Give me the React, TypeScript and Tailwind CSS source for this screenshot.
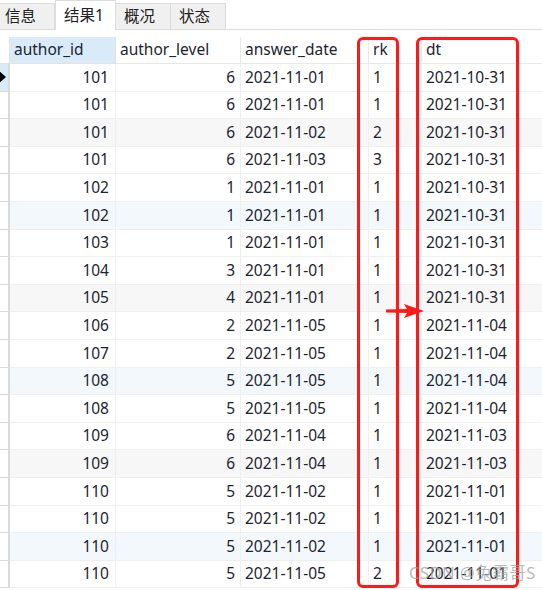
import React from "react";

const rows: [string, string, string, string, string][] = [
  ["101", "6", "2021-11-01", "1", "2021-10-31"],
  ["101", "6", "2021-11-01", "1", "2021-10-31"],
  ["101", "6", "2021-11-02", "2", "2021-10-31"],
  ["101", "6", "2021-11-03", "3", "2021-10-31"],
  ["102", "1", "2021-11-01", "1", "2021-10-31"],
  ["102", "1", "2021-11-01", "1", "2021-10-31"],
  ["103", "1", "2021-11-01", "1", "2021-10-31"],
  ["104", "3", "2021-11-01", "1", "2021-10-31"],
  ["105", "4", "2021-11-01", "1", "2021-10-31"],
  ["106", "2", "2021-11-05", "1", "2021-11-04"],
  ["107", "2", "2021-11-05", "1", "2021-11-04"],
  ["108", "5", "2021-11-05", "1", "2021-11-04"],
  ["108", "5", "2021-11-05", "1", "2021-11-04"],
  ["109", "6", "2021-11-04", "1", "2021-11-03"],
  ["109", "6", "2021-11-04", "1", "2021-11-03"],
  ["110", "5", "2021-11-02", "1", "2021-11-01"],
  ["110", "5", "2021-11-02", "1", "2021-11-01"],
  ["110", "5", "2021-11-02", "1", "2021-11-01"],
  ["110", "5", "2021-11-05", "2", "2021-11-01"],
];

const tabs = ["信息", "结果1", "概况", "状态"];

const cols = "grid grid-cols-[10px_106px_125px_128px_53px_1fr]";

function rowBg(i: number) {
  // every third row gets a faint tint, alternating grey / blue
  if ((i + 1) % 6 === 3) return "bg-[#f7f7f7]";
  if ((i + 1) % 6 === 0) return "bg-[#f3f8fd]";
  return "bg-white";
}

export default function App() {
  return (
    <div
      className="relative h-[590px] w-[542px] overflow-hidden bg-white text-[15.5px] text-[#1c2430]"
      style={{ fontFamily: '"Noto Sans", "Noto Sans CJK SC", sans-serif' }}
    >
      {/* tab strip */}
      <div className="flex h-[30px] items-end">
        {tabs.map((t, i) =>
          i === 1 ? (
            <div
              key={t}
              className="flex h-[30px] w-[61px] items-center border-x border-t border-[#dcdcdc] bg-white pl-[8px] text-[#222]"
            >
              {t}
            </div>
          ) : (
            <div
              key={t}
              className={`flex h-[27px] w-[55px] items-center border-b border-r border-t border-[#dcdcdc] bg-[#f0f0f0] text-[#222] ${i === 0 ? "pl-[5px]" : "pl-[8px]"}`}
            >
              {t}
            </div>
          ),
        )}
        <div className="h-[27px] flex-1 border-b border-[#dcdcdc]" />
      </div>

      <div className="h-[7px]" />

      {/* header */}
      <div className={`${cols} h-[27px]`}>
        <div className="border-b border-r border-[#e2e2e2]" />
        <div className="flex items-center border-b border-r border-[#e2e2e2] bg-[#d9eaf9] pl-1">author_id</div>
        <div className="flex items-center border-b border-r border-[#e8e8e8] pl-1">author_level</div>
        <div className="flex items-center border-b border-r border-[#e8e8e8] pl-1">answer_date</div>
        <div className="flex items-center border-b border-r border-[#e8e8e8] pl-1">rk</div>
        <div className="flex items-center border-b border-[#e8e8e8] pl-1">dt</div>
      </div>

      {/* rows */}
      {rows.map((r, i) => (
        <div key={i} className={`${cols} h-[27.6px]`}>
          <div
            className={`flex items-center border-b border-r-2 border-[#dadada] ${i === 0 ? "bg-[#d9eaf9]" : "bg-white"}`}
          >
            {i === 0 && (
              <svg width="8" height="12" viewBox="0 0 8 12" className="-ml-[1px]">
                <path d="M0 0 L7 6 L0 12 Z" fill="#000" />
              </svg>
            )}
          </div>
          <div className={`flex items-center justify-end border-b border-r border-[#efefef] pr-[6px] ${rowBg(i)}`}>{r[0]}</div>
          <div className={`flex items-center justify-end border-b border-r border-[#efefef] pr-[5px] ${rowBg(i)}`}>{r[1]}</div>
          <div className={`flex items-center border-b border-r border-[#efefef] pl-1 ${rowBg(i)}`}>{r[2]}</div>
          <div className={`flex items-center border-b border-r border-[#efefef] pl-1 ${rowBg(i)}`}>{r[3]}</div>
          <div className={`flex items-center border-b border-[#efefef] pl-1 ${rowBg(i)}`}>{r[4]}</div>
        </div>
      ))}

      {/* annotation boxes */}
      <div className="absolute left-[357px] top-[37px] h-[551px] w-[42px] rounded-[6px] border-[3px] border-[#ff1a1a]" />
      <div className="absolute left-[416px] top-[37px] h-[551px] w-[103px] rounded-[6px] border-[3px] border-[#ff1a1a]" />

      {/* arrow */}
      <svg className="absolute left-[386px] top-[303px]" width="38" height="16" viewBox="0 0 38 16">
        <path d="M0 6.5 L21 6 L18 1 L38 8 L18 15 L21 10 L0 9.5 Z" fill="#ff1a1a" />
      </svg>

      {/* watermark */}
      <div className="pointer-events-none absolute left-[409px] top-[561px] text-[16.5px] tracking-[0.5px] text-[#a0a0a0]/75">
        CSDN @兔霸哥S
      </div>
    </div>
  );
}
